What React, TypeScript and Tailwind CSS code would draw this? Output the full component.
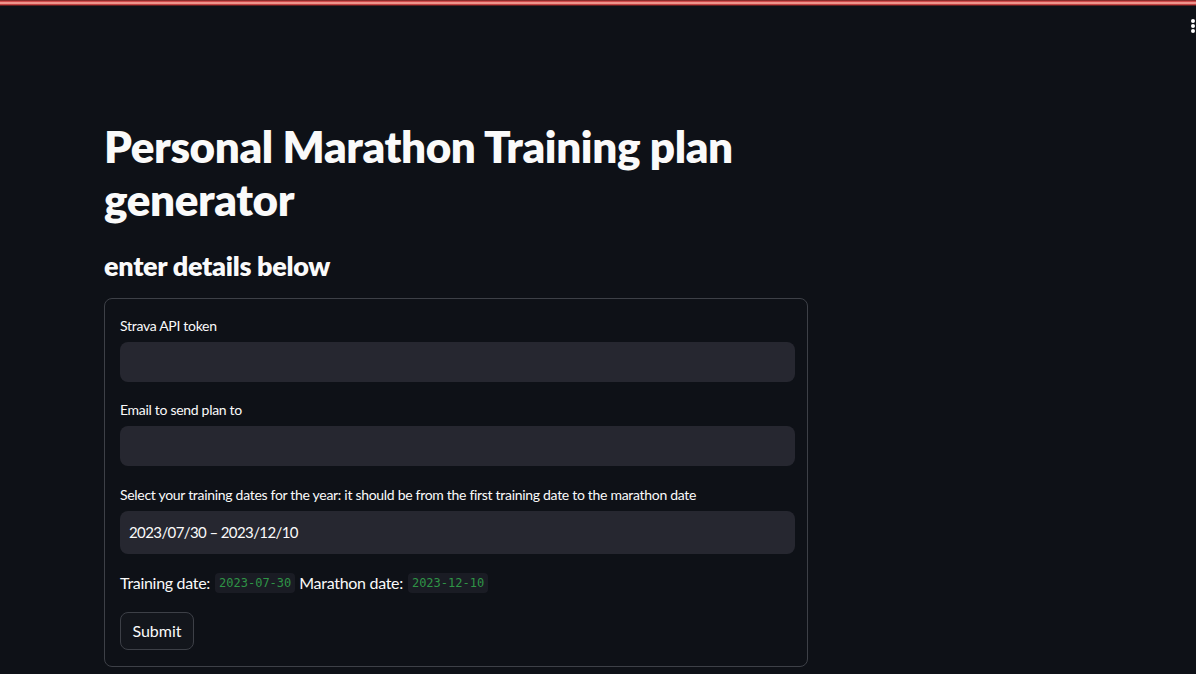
export default function App() {
  return (
    <div className="relative min-h-[674px] w-full overflow-hidden bg-[#0e1117] text-[#fafafa] font-['Lato','Noto_Sans',sans-serif]">
      {/* top decoration */}
      <div className="h-[6px] w-full bg-[linear-gradient(180deg,#6e1d1d_0%,#e35656_30%,#f9c2b4_50%,#d84a4a_72%,#2a0d0d_100%)]" />

      {/* menu dots */}
      <div className="absolute right-[1px] top-[19px] flex flex-col gap-[1px]">
        <span className="h-[4px] w-[4px] rounded-full bg-white" />
        <span className="h-[4px] w-[4px] rounded-full bg-white" />
        <span className="h-[4px] w-[4px] rounded-full bg-white" />
      </div>

      <div className="ml-[104px] w-[704px] pt-[114px]">
        <h1 className="text-[44px] font-[800] leading-[53px] tracking-[-0.4px]">
          Personal Marathon Training plan generator
        </h1>
        <h2 className="mt-[23px] text-[27px] font-[800] leading-[34px] tracking-[-0.3px]">enter details below</h2>

        {/* form */}
        <div className="mt-[15px] rounded-lg border border-[#3d4047] py-4 pl-[15px] pr-[12px]">
          <div className="text-[14px] leading-[22px] tracking-[-0.3px]">Strava API token</div>
          <div className="mt-[5px] h-[40px] rounded-lg bg-[#262730]" />

          <div className="mt-[17px] text-[14px] leading-[22px] tracking-[-0.3px]">Email to send plan to</div>
          <div className="mt-[5px] h-[40px] rounded-lg bg-[#262730]" />

          <div className="mt-[18px] text-[14px] leading-[22px] tracking-[-0.3px]">
            Select your training dates for the year: it should be from the first training date to the marathon date
          </div>
          <div className="mt-[5px] flex h-[43px] items-center rounded-lg bg-[#262730] px-[9px] text-[15px] tracking-[-0.6px]">
            2023/07/30 – 2023/12/10
          </div>

          <div className="mt-[17px] flex items-center text-[16px] leading-[24px] tracking-[-0.3px]">
            <span>Training date:</span>
            <code className="ml-[5px] rounded-[4px] bg-[#1a1c24] px-[4px] py-[2px] font-['DejaVu_Sans_Mono',monospace] text-[12px] leading-[16px] tracking-normal text-[#2f9446]">
              2023-07-30
            </code>
            <span className="ml-[4px]">Marathon date:</span>
            <code className="ml-[5px] rounded-[4px] bg-[#1a1c24] px-[4px] py-[2px] font-['DejaVu_Sans_Mono',monospace] text-[12px] leading-[16px] tracking-normal text-[#2f9446]">
              2023-12-10
            </code>
          </div>

          <button className="mt-[17px] h-[38px] w-[74px] rounded-lg border border-[#3d4047] bg-[#13161c] text-[16px]">
            Submit
          </button>
        </div>
      </div>
    </div>
  )
}
